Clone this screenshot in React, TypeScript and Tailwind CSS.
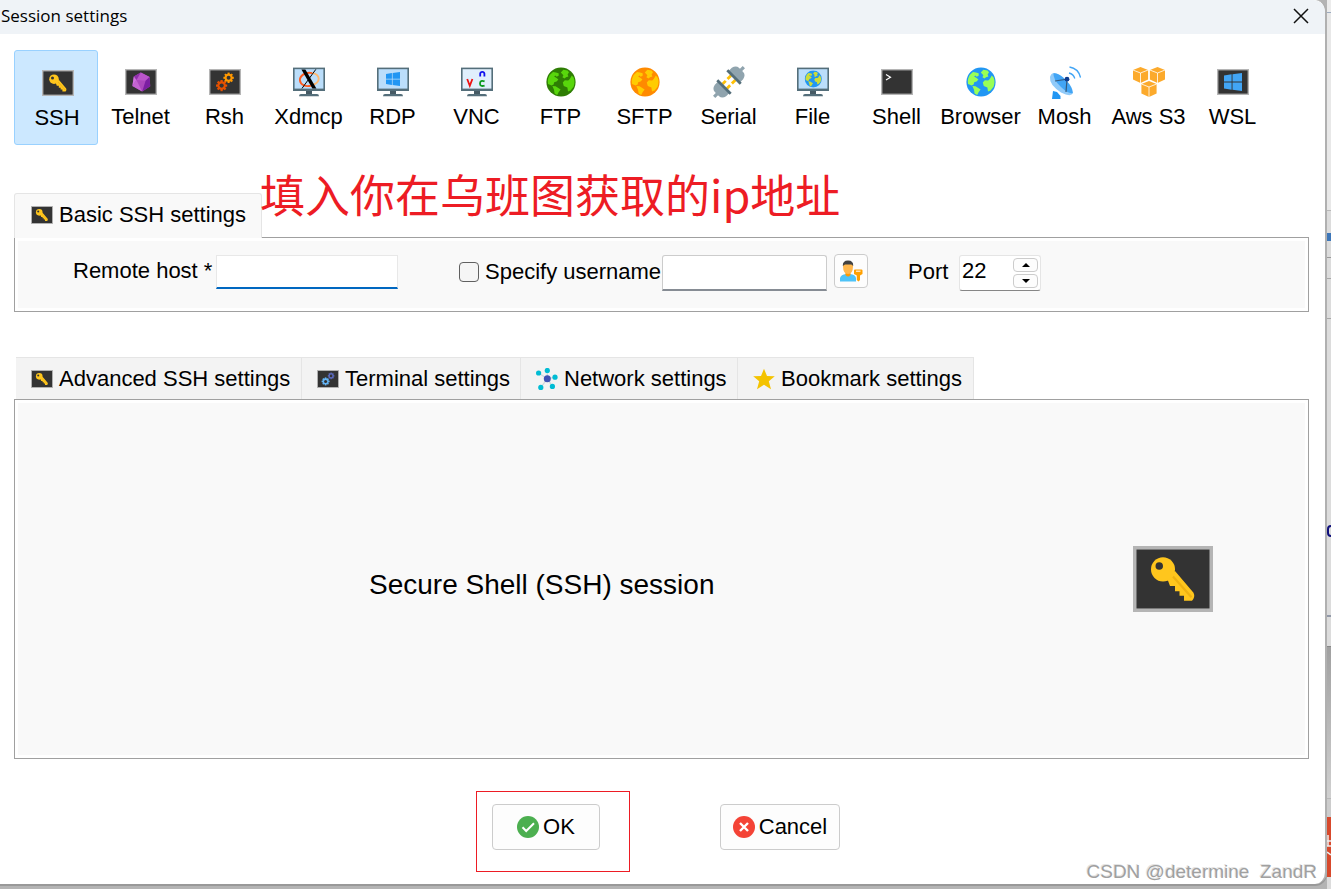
import { useState, type ReactNode } from "react";

type IconProps = { className?: string };

function Terminal({ className = "w-8 h-[26px]", children }: { className?: string; children?: ReactNode }) {
  return (
    <svg viewBox="0 0 32 26" preserveAspectRatio="none" className={className} aria-hidden="true">
      <rect width="32" height="26" fill="#b5b5b5" />
      <rect x="1.4" y="1.4" width="29.2" height="23.2" fill="#333333" />
      {children}
    </svg>
  );
}

function Monitor({ screen = "#bbdefb", children }: { screen?: string; children?: ReactNode }) {
  return (
    <svg viewBox="0 0 32 30" className="h-[30px] w-8" aria-hidden="true">
      <rect x="0" y="0.6" width="32" height="23.4" fill="#546e7a" />
      <rect x="1.6" y="2.2" width="28.8" height="19.4" fill={screen} />
      <path d="M13 24h6v3h-6z" fill="#455a64" />
      <path d="M8 27h16q2 0 2 2.2H6Q6 27 8 27z" fill="#546e7a" />
      {children}
    </svg>
  );
}

function KeyIcon({ className }: IconProps) {
  return (
    <Terminal className={className}>
      <path d="M13.6 12.6 16.8 9.8 24.2 18.4Q25 20 23.6 21.6H20.4V19.6H18.6V17.8H16.8V15.8H14.8z" fill="#ffc61d" />
      <path d="M16 12 23.4 20.2" stroke="#efb212" strokeWidth="0.9" />
      <circle cx="12" cy="9.2" r="4.8" fill="#ffc61d" />
      <circle cx="10.5" cy="7.9" r="1.5" fill="#333" />
    </Terminal>
  );
}

function Gear({ x, y, r, color }: { x: number; y: number; r: number; color: string }) {
  return (
    <g transform={`translate(${x} ${y})`} fill={color}>
      {[0, 45, 90, 135].map((a) => (
        <rect key={a} x={-r * 0.2} y={-r} width={r * 0.4} height={r * 2} transform={`rotate(${a})`} />
      ))}
      <circle r={r * 0.76} />
      <circle r={r * 0.38} fill="#333" />
    </g>
  );
}

function Globe({ sea, land, size = 30 }: { sea: string; land: string; size?: number }) {
  return (
    <svg viewBox="0 0 30 30" width={size} height={size} aria-hidden="true">
      <circle cx="15" cy="15" r="14.6" fill={sea} />
      <g fill={land}>
        <path d="M2.2 11.5Q3.600 7 7 5L10 5.400 12.600 6.200 12.800 8.600 10.800 9.800 9.200 8.400 8.200 9.600 10.600 11 12.400 12.400 10.600 14.400 8.200 15.200 7.600 17.600 5.600 18.600 2 17Q1.400 14 2.200 11.500z" />
        <path d="M6.400 19 9.600 19.200 14.600 22.400 12.600 25.200 11.200 28 8.600 26.400 8 22.800z" />
        <path d="M14.800 5.600 17.400 2.800 21.600 3.400 23 5.200 21.600 7.400 22.400 9.600 20 10.200 18.600 11.600 16.400 10.200 17.400 8.200z" />
        <path d="M17.800 19 16.800 15.600 18.800 13.200 22.200 13.400 23.800 12 25.800 8.600 27.600 10.600Q29.400 15 27.600 19.800L24.600 23.400 22 24.400 21.400 20.600z" />
      </g>
    </svg>
  );
}

function WindowsMark({ x, y, w, h, color }: { x: number; y: number; w: number; h: number; color: string }) {
  return (
    <svg x={x} y={y} width={w} height={h} viewBox="0 0 18 18" preserveAspectRatio="none">
      <path d="M0 2.6 7.6 1.3V8.6H0zM8.5 1.2 18 0V8.6H8.5zM0 9.5H7.6V16.7L0 15.5zM8.5 9.5H18V18L8.5 16.8z" fill={color} />
    </svg>
  );
}

function TelnetIcon() {
  return (
    <Terminal>
      <path d="M15.8 3.4 24.6 8 25.2 17.2 17.2 22.4 7.4 17 8.8 7.6z" fill="#ab47bc" />
      <path d="M15.8 3.4 24.6 8 20.6 11.8 11.4 11z" fill="#ba55ca" />
      <path d="M24.6 8 25.2 17.2 17.2 22.4 20.6 11.8z" fill="#7b1fa2" />
      <path d="M15.8 3.4 11.4 11 8.8 7.6z" fill="#9030ac" />
      <path d="M8.8 7.6 11.4 11 7.4 17z" fill="#ce73dc" />
      <path d="M7.4 17 11.4 11 17.2 22.4z" fill="#c364d1" />
    </Terminal>
  );
}

function XdmcpIcon() {
  return (
    <Monitor>
      <g transform="rotate(-8 16 12)" fill="none" strokeWidth="1.9">
        <path d="M20 6.6C13 4 6.8 8 6.8 12.4 6.8 17 12 19.6 17 18.8" stroke="#ff5a1f" />
        <path d="M20 6.6C28 9 28 17.6 17 18.8" stroke="#ffb870" />
      </g>
      <path d="M8.400 2.400H12.400L23.400 21.400H19.400z" fill="#000" />
      <path d="M22.800 2.400 9 21.400" stroke="#000" strokeWidth="1" />
    </Monitor>
  );
}

function VncIcon() {
  return (
    <Monitor screen="#e0effc">
      <g fill="none" strokeWidth="1.8">
        <path d="M6.2 12 8.8 18.8 11.4 12" stroke="#ee1111" />
        <path d="M19.2 9.6V6.6Q19.4 4.8 21.3 4.8T23.4 6.6V9.6" stroke="#1111ee" />
        <path d="M23.6 14.4Q19 12.8 19 16.4T23.6 18.6" stroke="#0a9a20" />
      </g>
    </Monitor>
  );
}

function SerialIcon() {
  return (
    <svg viewBox="0 0 32 32" className="size-8" aria-hidden="true">
      <g transform="rotate(45 16 16)">
        <path d="M14.4-5h3.2v6h-3.2zM14.4 31h3.2v6h-3.2z" fill="#90a4ae" />
        <path d="M8 8.200V4Q9-1 13-1H19Q23-1 24 4V8.200zM8 23.800V28Q9 33 13 33H19Q23 33 24 28V23.800z" fill="#90a4ae" />
        <path d="M11.500 10h2.800v5H11.500zM17.700 10H20.500v5h-2.800zM11.500 17.500h2.800V22H11.500zM17.700 17.500H20.500V22h-2.800z" fill="#ffc107" />
        <path d="M6.500 7.500H25.500V10.300H6.500zM6.500 21.700H25.500V24.500H6.500z" fill="#546e7a" />
      </g>
    </svg>
  );
}

function MoshIcon() {
  return (
    <svg viewBox="0 0 32 33" className="h-[33px] w-8" aria-hidden="true">
      <path d="M4 25 8 26 11.500 30V33H3z" fill="#2196f3" />
      <path d="M4.400 7.200Q8 6 15 13.500T24 27Q22 31.500 12 26.500Q0 18.500 1 11Q2 7.500 4.400 7.200z" fill="#90caf9" />
      <path d="M4.400 7.200Q10 6.500 17 14T23.800 27Q20 28.500 12 21T4.400 7.200z" fill="#42a5f5" />
      <path d="M6 15 18 13.200 17 26" fill="none" stroke="#37597a" strokeWidth="1.200" />
      <circle cx="18" cy="13.200" r="2.400" fill="#0d3c90" />
      <path d="M20 7Q24.500 8 25.800 12.500M20.500 1Q29.500 2.500 31.500 11.500" fill="none" stroke="#42a5f5" strokeWidth="1.300" />
    </svg>
  );
}

function AwsIcon() {
  return (
    <svg viewBox="0 0 32 30" className="h-[30px] w-8" aria-hidden="true">
      {[[7.500, 0], [24.500, 0], [16, 14]].map(([x, y]) => (
        <g key={x} transform={`translate(${x} ${y})`}>
          <path d="M0 0 7.600 3V12.500L0 16-7.600 12.500V3z" fill="#fcaa2c" />
          <path d="M-7.600 3 0 6 7.600 3M0 6V16" fill="none" stroke="#fff" strokeWidth="0.800" />
        </g>
      ))}
    </svg>
  );
}

const sessions: { name: string; icon: ReactNode }[] = [
  { name: "SSH", icon: <KeyIcon /> },
  { name: "Telnet", icon: <TelnetIcon /> },
  { name: "Rsh", icon: <Terminal><Gear x={19.600} y={8.800} r={5.200} color="#ff9800" /><Gear x={12.600} y={16.600} r={5.600} color="#e65100" /></Terminal> },
  { name: "Xdmcp", icon: <XdmcpIcon /> },
  { name: "RDP", icon: <Monitor><WindowsMark x={9} y={5} w={14} h={14} color="#2196f3" /></Monitor> },
  { name: "VNC", icon: <VncIcon /> },
  { name: "FTP", icon: <Globe sea="#2e7d04" land="#58d60c" /> },
  { name: "SFTP", icon: <Globe sea="#ff8a00" land="#ffcc00" /> },
  { name: "Serial", icon: <SerialIcon /> },
  { name: "File", icon: <Monitor><svg x="7.500" y="3.200" width="17.500" height="17.500" viewBox="0 0 30 30"><Globe sea="#2196f3" land="#cddc39" /></svg></Monitor> },
  { name: "Shell", icon: <Terminal><path d="M5 5.500 9.500 8.200 5 11" fill="none" stroke="#fff" strokeWidth="1.200" /></Terminal> },
  { name: "Browser", icon: <Globe sea="#2196f3" land="#99ff55" /> },
  { name: "Mosh", icon: <MoshIcon /> },
  { name: "Aws S3", icon: <AwsIcon /> },
  { name: "WSL", icon: <Terminal><WindowsMark x={7} y={4} w={18} h={18} color="#42a5f5" /></Terminal> },
];

function NetworkIcon() {
  const nodes = [[2.600, 5], [11.300, 2.500], [19, 9.200], [16.400, 18.400], [4.800, 19.400]];
  return (
    <svg viewBox="0 0 22 22" className="size-[22px]" aria-hidden="true">
      {nodes.map(([x, y]) => <path key={x} d={`M11.300 10.800 ${x} ${y}`} stroke="#cfd8dc" strokeWidth="1.300" />)}
      {nodes.map(([x, y]) => <circle key={x} cx={x} cy={y} r="2.600" fill="#00bcd4" />)}
      <circle cx="11.300" cy="10.800" r="3.500" fill="#3f51b5" />
    </svg>
  );
}

const settingsTabs: { label: string; icon: ReactNode; cls: string }[] = [
  { label: "Advanced SSH settings", icon: <KeyIcon className="h-[18px] w-[22px]" />, cls: "w-[286px]" },
  { label: "Terminal settings", icon: <Terminal className="h-[18px] w-[22px]"><Gear x={20.500} y={8.500} r={4.800} color="#5c6bc0" /><Gear x={12.500} y={16.500} r={5.800} color="#64b5f6" /></Terminal>, cls: "w-[219px]" },
  { label: "Network settings", icon: <NetworkIcon />, cls: "w-[217px]" },
  { label: "Bookmark settings", icon: <svg viewBox="0 0 22 22" className="size-[22px]" aria-hidden="true"><path d="M11 0.800 14 8 21.800 8.300 15.800 13.200 18 21.200 11 16.800 4 21.200 6.200 13.200 0.200 8.300 8 8z" fill="#f4c300" /></svg>, cls: "w-[236px]" },
];

function UserKeyIcon() {
  return (
    <svg viewBox="0 0 24 22" className="h-[22px] w-6" aria-hidden="true">
      <path d="M1 21.500V18Q2 14.500 7 14H11Q16.500 14.500 17 18V21.500z" fill="#4fc3f7" />
      <path d="M6.500 12H11.500V15Q9 18 6.500 15z" fill="#ff9800" />
      <path d="M4 6Q4 1.500 9 1.500T14 6Q14 14 9 14T4 6z" fill="#ffb74d" />
      <path d="M3.800 6Q3.500 0.500 9 0.500 14.600 0.500 14.200 6L12.400 4.400 6 4.600z" fill="#424242" />
      <path d="M15 10.500Q15 9.500 16 9.500H22.500Q23.500 9.500 23.500 10.500V14L21 15.500V20L19.500 21.500 17.800 20V15.500L15 14z" fill="#ffa000" />
      <path d="M17 11.200H21.500" stroke="#fff3e0" strokeWidth="1.200" />
    </svg>
  );
}

function Backdrop() {
  return (
    <div className="flex w-1 shrink-0 flex-col overflow-hidden bg-[#dcdcdc]" aria-hidden="true">
      <div className="h-[13px] border-b border-[#9cabc0] bg-[#ececec]" />
      <div className="h-[198px] border-b border-[#b8b8b8] bg-[#e8e8e8]" />
      <div className="h-[47px] border-b border-[#9a9a9a] pt-[22px]"><div className="h-2 w-1 bg-[#3d76b8]" /></div>
      <div className="h-[21px] border-b border-[#a8a8a8]" />
      <div className="h-[40px] border-b border-[#a8a8a8]" />
      <div className="h-[298px] border-b-2 border-[#9299a8] pt-[206px]"><div className="h-3 w-2 rounded-full border-2 border-[#10107c]" /></div>
      <div className="h-[30px] border-b border-[#888]" />
      <div className="h-[152px] border-b border-[#b8b8b8] bg-linear-to-b from-[#a0a0a0] to-[#d0d0d0]" />
      <div className="h-[18px] bg-[#cccccc]" />
      <div className="h-[60px] bg-[#d7492c]">
        <svg viewBox="0 0 4 60" className="h-[60px] w-1"><path d="M0 24h4M0 29h4M1 18v11M0 35l4 3" stroke="#eee" strokeWidth="1.500" fill="none" /></svg>
      </div>
    </div>
  );
}

const panel = "border border-[#a0a0a0] bg-[#f9f9f9] shadow-[inset_0_0_0_3px_#ffffff]";

export default function App() {
  const [session, setSession] = useState("SSH");
  const [port, setPort] = useState(22);

  return (
    <div className="flex min-h-screen bg-[#b4b4b4] font-['Liberation_Sans',Arial,sans-serif] text-[22px] leading-[26px] text-black">
      <main className="relative mb-[5px] min-w-0 flex-1 rounded-tr-xl rounded-br-xl border-r-2 border-[#b0b0b0] bg-white shadow-[0_2px_0_#999999]">
        <header className="flex h-[34px] items-start justify-between rounded-tr-xl bg-[#eff3f7] pt-1 pr-4 pl-px">
          <h1 className="font-['Open_Sans','Noto_Sans',sans-serif] text-[17px] leading-6">Session settings</h1>
          <button type="button" aria-label="Close" className="mt-1 size-4">
            <svg viewBox="0 0 16 16" className="size-4"><path d="M1 1 15 15M15 1 1 15" stroke="#111" strokeWidth="1.500" /></svg>
          </button>
        </header>

        <nav aria-label="Session type" className="flex px-[14px] pt-4">
          {sessions.map(({ name, icon }) => (
            <button
              key={name}
              type="button"
              aria-pressed={session === name}
              onClick={() => setSession(name)}
              className={`flex h-[95px] w-[84px] flex-col items-center rounded-[3px] border whitespace-nowrap ${session === name ? "border-[#99d1ff] bg-[#cce8ff] pt-3 pl-[3px]" : "border-transparent pt-[11px] pl-[2px]"}`}
            >
              <span className="flex h-[42px] items-start justify-center"><span className="flex h-10 items-center">{icon}</span></span>
              <span className="-ml-px">{name}</span>
            </button>
          ))}
        </nav>

        <form onSubmit={(e) => e.preventDefault()} className="pr-[16px] pb-3 pl-[14px]">
          <section className="mt-12">
            <div className="relative z-10 flex items-end">
              <h2 className="-mb-px flex h-[45px] w-[248px] items-center gap-[6px] rounded-t-[3px] border border-b-0 border-[#e5e5e5] bg-[#f9f9f9] pb-[3px] pl-4 whitespace-nowrap">
                <KeyIcon className="h-[18px] w-[22px]" />
                Basic SSH settings
              </h2>
              <p className="absolute top-[-32px] left-[246px] font-['Noto_Sans_CJK_SC',sans-serif] text-[45px] leading-[66px] font-normal whitespace-nowrap text-[#ed1c24]">
                填入你在乌班图获取的ip地址
              </p>
            </div>
            <div className={`flex h-[75px] items-start pt-4 pl-[58px] ${panel}`}>
              <label htmlFor="host" className="w-[143px] pt-1 whitespace-nowrap">Remote host *</label>
              <input id="host" type="text" className="mt-px h-[34px] w-[182px] border border-b-2 border-[#e8e8e8] border-b-[#0067c0] bg-white px-1 outline-none" />
              <label className="ml-[61px] flex w-[199px] items-center gap-[6px] pt-[5px] whitespace-nowrap">
                <input type="checkbox" className="size-5 shrink-0 appearance-none rounded-[4px] border border-[#606060] bg-[#f5f5f5] checked:bg-[#0067c0]" />
                Specify username
              </label>
              <input type="text" aria-label="Username" className="ml-1 mt-px h-9 w-[165px] rounded-t-[3px] border border-b-2 border-[#cccccc] border-b-[#868c94] bg-white px-1 outline-none" />
              <button type="button" aria-label="Manage users" className="ml-[7px] flex size-[34px] items-center justify-center rounded-[4px] border border-[#cccccc] bg-[#fdfdfd]"><UserKeyIcon /></button>
              <label htmlFor="port" className="ml-10 w-[42px] pt-[5px]">Port</label>
              <div className="mt-px ml-[9px] flex h-9 w-[82px] items-center justify-between rounded-[3px] border border-[#e5e5e5] border-b-[#868686] bg-white px-[2px]">
                <input id="port" type="text" inputMode="numeric" value={port} onChange={(e) => setPort(Number(e.target.value) || 0)} className="w-12 min-w-0 bg-transparent pb-1 outline-none" />
                <div className="flex flex-col gap-[2px]">
                  <button type="button" aria-label="Increase port" onClick={() => setPort(port + 1)} className="flex h-[14px] w-[25px] items-center justify-center rounded-[4px] border border-[#cccccc] bg-[#fdfdfd]">
                    <svg viewBox="0 0 8 4" className="h-1 w-2"><path d="M0 4 4 0 8 4z" /></svg>
                  </button>
                  <button type="button" aria-label="Decrease port" onClick={() => setPort(port - 1)} className="flex h-[14px] w-[25px] items-center justify-center rounded-[4px] border border-[#cccccc] bg-[#fdfdfd]">
                    <svg viewBox="0 0 8 4" className="h-1 w-2"><path d="M0 0 4 4 8 0z" /></svg>
                  </button>
                </div>
              </div>
            </div>
          </section>

          <section className="mt-[45px]">
            <div role="tablist" className="flex pl-[2px]">
              {settingsTabs.map(({ label, icon, cls }) => (
                <button key={label} type="button" role="tab" className={`flex h-[42px] items-center gap-[6px] border-t border-r border-[#e5e5e5] bg-[#f3f3f3] pl-[15px] whitespace-nowrap ${cls}`}>
                  {icon}
                  {label}
                </button>
              ))}
            </div>
            <div className={`flex h-[360px] items-center justify-between pr-[95px] pl-[354px] ${panel}`}>
              <p className="pt-3 text-[28px] leading-8 whitespace-nowrap">Secure Shell (SSH) session</p>
              <KeyIcon className="h-[66px] w-20" />
            </div>
          </section>

          <div className="mt-8 flex items-center gap-[90px] pl-[462px]">
            <div className="flex h-[81px] w-[154px] items-center border border-[#ed1c24] pb-[9px] pl-[15px]">
              <button type="submit" className="flex h-[46px] w-[108px] items-center justify-center gap-1 rounded-[4px] border border-[#cccccc] bg-[#fdfdfd]">
                <svg viewBox="0 0 22 22" className="size-[22px]" aria-hidden="true"><circle cx="11" cy="11" r="11" fill="#4caf50" /><path d="M5.500 11.200 9.200 15 17 7.200" fill="none" stroke="#fff" strokeWidth="2" /></svg>
                OK
              </button>
            </div>
            <button type="button" className="mb-[9px] flex h-[46px] w-[120px] items-center justify-center gap-1 rounded-[4px] border border-[#cccccc] bg-[#fdfdfd]">
              <svg viewBox="0 0 22 22" className="size-[22px]" aria-hidden="true"><circle cx="11" cy="11" r="11" fill="#f44336" /><path d="M7 7 15 15M15 7 7 15" fill="none" stroke="#fff" strokeWidth="2.400" /></svg>
              Cancel
            </button>
          </div>
        </form>
        <p className="absolute right-2 bottom-px text-[19px] leading-[22px] whitespace-pre text-[#a0a0a0] [text-shadow:-1px_-1px_0_#e4e4e4]">CSDN @determine{"  "}ZandR</p>
      </main>
      <Backdrop />
    </div>
  );
}
